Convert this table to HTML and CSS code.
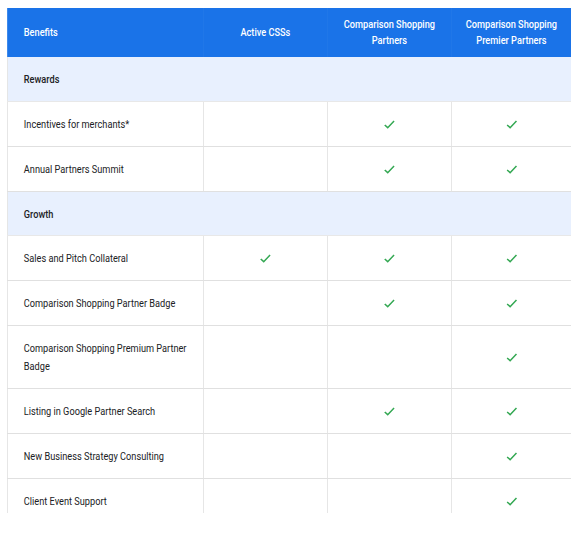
FILE: index.html
```html
<!DOCTYPE html>
<html lang="en">
<head>
    <meta charset="UTF-8">
    <meta name="viewport" content="width=device-width, initial-scale=1.0">
    <title>Partner Benefits</title>
    <link rel="stylesheet" href="styles.css">
</head>
<body>

<div class="table-wrap">
    <table class="benefits">
        <colgroup>
            <col class="col-name">
            <col class="col-tier">
            <col class="col-tier">
            <col class="col-last">
        </colgroup>
        <thead>
            <tr>
                <th class="name">Benefits</th>
                <th>Active CSSs</th>
                <th>Comparison Shopping Partners</th>
                <th>Comparison Shopping Premier Partners</th>
            </tr>
        </thead>
        <tbody>
            <tr class="group"><td colspan="4">Rewards</td></tr>
            <tr>
                <td class="name">Incentives for merchants*</td>
                <td></td>
                <td><svg class="check" viewBox="0 0 12 10" preserveAspectRatio="none"><path d="M1 5.5 L4.2 8.5 L11 1.2"/></svg></td>
                <td><svg class="check" viewBox="0 0 12 10" preserveAspectRatio="none"><path d="M1 5.5 L4.2 8.5 L11 1.2"/></svg></td>
            </tr>
            <tr>
                <td class="name">Annual Partners Summit</td>
                <td></td>
                <td><svg class="check" viewBox="0 0 12 10" preserveAspectRatio="none"><path d="M1 5.5 L4.2 8.5 L11 1.2"/></svg></td>
                <td><svg class="check" viewBox="0 0 12 10" preserveAspectRatio="none"><path d="M1 5.5 L4.2 8.5 L11 1.2"/></svg></td>
            </tr>
            <tr class="group"><td colspan="4">Growth</td></tr>
            <tr>
                <td class="name">Sales and Pitch Collateral</td>
                <td><svg class="check" viewBox="0 0 12 10" preserveAspectRatio="none"><path d="M1 5.5 L4.2 8.5 L11 1.2"/></svg></td>
                <td><svg class="check" viewBox="0 0 12 10" preserveAspectRatio="none"><path d="M1 5.5 L4.2 8.5 L11 1.2"/></svg></td>
                <td><svg class="check" viewBox="0 0 12 10" preserveAspectRatio="none"><path d="M1 5.5 L4.2 8.5 L11 1.2"/></svg></td>
            </tr>
            <tr>
                <td class="name">Comparison Shopping Partner Badge</td>
                <td></td>
                <td><svg class="check" viewBox="0 0 12 10" preserveAspectRatio="none"><path d="M1 5.5 L4.2 8.5 L11 1.2"/></svg></td>
                <td><svg class="check" viewBox="0 0 12 10" preserveAspectRatio="none"><path d="M1 5.5 L4.2 8.5 L11 1.2"/></svg></td>
            </tr>
            <tr>
                <td class="name">Comparison Shopping Premium Partner Badge</td>
                <td></td>
                <td></td>
                <td><svg class="check" viewBox="0 0 12 10" preserveAspectRatio="none"><path d="M1 5.5 L4.2 8.5 L11 1.2"/></svg></td>
            </tr>
            <tr>
                <td class="name">Listing in Google Partner Search</td>
                <td></td>
                <td><svg class="check" viewBox="0 0 12 10" preserveAspectRatio="none"><path d="M1 5.5 L4.2 8.5 L11 1.2"/></svg></td>
                <td><svg class="check" viewBox="0 0 12 10" preserveAspectRatio="none"><path d="M1 5.5 L4.2 8.5 L11 1.2"/></svg></td>
            </tr>
            <tr>
                <td class="name">New Business Strategy Consulting</td>
                <td></td>
                <td></td>
                <td><svg class="check" viewBox="0 0 12 10" preserveAspectRatio="none"><path d="M1 5.5 L4.2 8.5 L11 1.2"/></svg></td>
            </tr>
            <tr>
                <td class="name">Client Event Support</td>
                <td></td>
                <td></td>
                <td><svg class="check" viewBox="0 0 12 10" preserveAspectRatio="none"><path d="M1 5.5 L4.2 8.5 L11 1.2"/></svg></td>
            </tr>
        </tbody>
    </table>
</div>

</body>
</html>
```

FILE: styles.css
```css
body {
    margin: 0;
    padding: 0;
    background-color: #fff;
    color: #202124;
    font-family: Roboto, "Liberation Sans", sans-serif;
}

/* the table text is a condensed face: lay out at full width, then squeeze to 80% */
.table-wrap {
    margin: 8px 0 0 7px;
    width: 564px;
    height: 505px;
    overflow: hidden;
}

.benefits {
    width: 705px;
    border-collapse: collapse;
    table-layout: fixed;
    font-size: 11.5px;
    line-height: 18px;
    transform: scaleX(0.8);
    transform-origin: 0 0;
}

/* widths in multiples of 5 so the squeezed edges land on whole pixels */
.col-name {
    width: 245px;
}

.col-tier {
    width: 155px;
}

.col-last {
    width: 150px;
}

.benefits th {
    background-color: #1a73e8;
    border-left: 1px solid #1a73e8;
    border-right: 1px solid #1a73e8;
    color: #fff;
    font-weight: 500;
    line-height: 16px;
    padding: 8px 12px 9px;
    text-align: center;
    vertical-align: middle;
}

.benefits th.name {
    padding-left: 20px;
    text-align: left;
}

.benefits td {
    padding: 13px 20px;
    border: 1px solid #e0e0e0;
    border-top: none;
    text-align: center;
    vertical-align: middle;
}

.benefits td.name {
    text-align: left;
}

.benefits .group td {
    background-color: #e8f0fe;
    border-bottom-color: #e8e8e8;
    font-weight: 500;
    text-align: left;
    padding-bottom: 12.5px;
}

.check {
    display: inline-block;
    width: 14px;
    height: 9px;
    vertical-align: middle;
    fill: none;
    stroke: #34a853;
    stroke-width: 1.6;
}
```
